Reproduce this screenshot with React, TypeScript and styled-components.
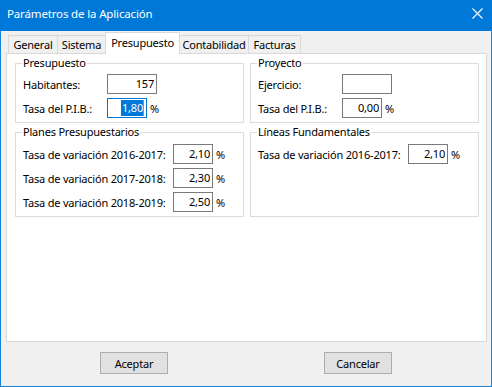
import React from "react";
import styled, { createGlobalStyle } from "styled-components";

const Global = createGlobalStyle`
  html, body { margin: 0; padding: 0; background: #ffffff; }
  body { font-family: "Noto Sans", "Segoe UI", sans-serif; font-size: 11px; letter-spacing: -0.2px; color: #000; }
  * { box-sizing: border-box; }
`;

const Window = styled.div`
  width: 492px;
  height: 387px;
  border: 1px solid #1883d7;
  border-top: none;
  background: #f0f0f0;
  display: flex;
  flex-direction: column;
`;

const TitleBar = styled.div`
  height: 31px;
  margin: 0 -1px;
  background: #0078d7;
  color: #ffffff;
  display: flex;
  align-items: flex-start;
  justify-content: space-between;
  padding: 6px 9px 0 7px;
  font-size: 11.5px;
  letter-spacing: -0.15px;
  flex-shrink: 0;
`;

const CloseIcon = styled.svg`
  margin-top: 2px;
  display: block;
`;

const Body = styled.div`
  flex: 1;
  display: flex;
  flex-direction: column;
  padding: 1px 4px 0 5px;
`;

const TabRow = styled.div`
  display: flex;
  height: 22px;
  padding-left: 2px;
  margin-bottom: -1px;
  position: relative;
  z-index: 1;
`;

const Tab = styled.div<{ $active?: boolean; $w: number }>`
  width: ${(p) => p.$w}px;
  height: ${(p) => (p.$active ? "22px" : "18px")};
  margin-top: ${(p) => (p.$active ? "0" : "3px")};
  margin-right: -1px;
  padding-top: ${(p) => (p.$active ? "2px" : "1px")};
  border: 1px solid #d9d9d9;
  border-bottom: none;
  background: ${(p) => (p.$active ? "#ffffff" : "#f0f0f0")};
  position: relative;
  z-index: ${(p) => (p.$active ? 2 : 1)};
  line-height: 15px;
  text-align: center;
  white-space: nowrap;
`;

const Panel = styled.div`
  height: 289px;
  background: #ffffff;
  border: 1px solid #d9d9d9;
  padding: 2px 6px 0 8px;
  display: grid;
  grid-template-columns: 229px 229px;
  column-gap: 6px;
  row-gap: 2px;
  align-content: start;
`;

const Group = styled.fieldset`
  margin: 0;
  min-width: 0;
  border: 1px solid #dcdcdc;
  padding: 0 4px 4px 7px;
`;

const GroupTitle = styled.legend`
  padding: 0 1px;
  margin-left: -1px;
  line-height: 14px;
`;

const FieldGrid = styled.div<{ $label: number; $gap: number; $top: number }>`
  display: grid;
  grid-template-columns: ${(p) => p.$label}px 1fr;
  row-gap: ${(p) => p.$gap}px;
  align-items: center;
  padding-top: ${(p) => p.$top}px;
`;

const Label = styled.span`
  white-space: nowrap;
`;

const FieldCell = styled.div`
  display: flex;
  align-items: center;
`;

const Field = styled.div<{ $w: number; $focused?: boolean }>`
  width: ${(p) => p.$w}px;
  height: 20px;
  border: 1px solid ${(p) => (p.$focused ? "#0078d7" : "#7a7a7a")};
  background: #ffffff;
  display: flex;
  align-items: center;
  justify-content: flex-end;
  padding-right: 2px;
  line-height: 14px;
`;

const Selection = styled.span`
  background: #0078d7;
  color: #ffffff;
  padding: 1px 0 1px 1px;
  border-right: 1px solid #e07b2b;
`;

const Unit = styled.span`
  margin-left: 3px;
`;

const ButtonRow = styled.div`
  display: flex;
  justify-content: center;
  gap: 156px;
  padding-top: 10px;
  padding-right: 1px;
`;

const Button = styled.button`
  width: 68px;
  height: 22px;
  background: #e1e1e1;
  border: 1px solid #adadad;
  font-family: inherit;
  font-size: 11px;
  letter-spacing: -0.2px;
  color: #000;
  padding: 0;
`;

type Row = { label: string; value: string; w: number; unit?: boolean; focused?: boolean };

function Rows({ rows, label, gap, top }: { rows: Row[]; label: number; gap: number; top: number }) {
  return (
    <FieldGrid $label={label} $gap={gap} $top={top}>
      {rows.map((r) => (
        <React.Fragment key={r.label}>
          <Label>{r.label}</Label>
          <FieldCell>
            <Field $w={r.w} $focused={r.focused}>
              {r.focused ? <Selection>{r.value}</Selection> : r.value}
            </Field>
            {r.unit && <Unit>%</Unit>}
          </FieldCell>
        </React.Fragment>
      ))}
    </FieldGrid>
  );
}

const tabs = [
  { label: "General", w: 50 },
  { label: "Sistema", w: 49 },
  { label: "Presupuesto", w: 75, active: true },
  { label: "Contabilidad", w: 70 },
  { label: "Facturas", w: 53 },
];

export default function App() {
  return (
    <>
      <Global />
      <Window>
        <TitleBar>
          <span>Parámetros de la Aplicación</span>
          <CloseIcon width="11" height="11" viewBox="0 0 11 11">
            <path d="M0.5 0.5 L10.5 10.5 M10.5 0.5 L0.5 10.5" stroke="#ffffff" strokeWidth="1.1" fill="none" />
          </CloseIcon>
        </TitleBar>
        <Body>
          <TabRow>
            {tabs.map((t) => (
              <Tab key={t.label} $w={t.w} $active={t.active}>
                {t.label}
              </Tab>
            ))}
          </TabRow>
          <Panel>
            <Group>
              <GroupTitle>Presupuesto</GroupTitle>
              <Rows
                label={84}
                gap={4}
                top={4}
                rows={[
                  { label: "Habitantes:", value: "157", w: 50 },
                  { label: "Tasa del P.I.B.:", value: "1,80", w: 40, unit: true, focused: true },
                ]}
              />
            </Group>
            <Group>
              <GroupTitle>Proyecto</GroupTitle>
              <Rows
                label={84}
                gap={4}
                top={4}
                rows={[
                  { label: "Ejercicio:", value: "", w: 50 },
                  { label: "Tasa del P.I.B.:", value: "0,00", w: 40, unit: true },
                ]}
              />
            </Group>
            <Group>
              <GroupTitle>Planes Presupuestarios</GroupTitle>
              <Rows
                label={150}
                gap={4}
                top={5}
                rows={[
                  { label: "Tasa de variación 2016-2017:", value: "2,10", w: 40, unit: true },
                  { label: "Tasa de variación 2017-2018:", value: "2,30", w: 40, unit: true },
                  { label: "Tasa de variación 2018-2019:", value: "2,50", w: 40, unit: true },
                ]}
              />
            </Group>
            <Group>
              <GroupTitle>Líneas Fundamentales</GroupTitle>
              <Rows
                label={150}
                gap={4}
                top={5}
                rows={[{ label: "Tasa de variación 2016-2017:", value: "2,10", w: 40, unit: true }]}
              />
            </Group>
          </Panel>
          <ButtonRow>
            <Button>Aceptar</Button>
            <Button>Cancelar</Button>
          </ButtonRow>
        </Body>
      </Window>
    </>
  );
}
